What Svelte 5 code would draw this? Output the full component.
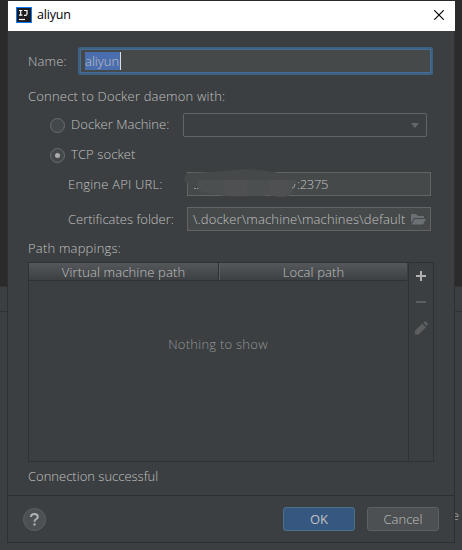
<script>
  let name = 'aliyun';
  let connection = 'tcp';
  const port = ':2375';
  const certificates = '\\.docker\\machine\\machines\\default';
  const columns = ['Virtual machine path', 'Local path'];
</script>

<div class="screen">
  <div class="backdrop">
    <div class="editor"></div>
    <div class="tool-header"></div>
    <div class="tool-body">e</div>
  </div>

  <div class="dialog">
    <header class="titlebar">
      <svg class="logo" width="16" height="16" viewBox="0 0 16 16">
        <rect width="16" height="16" fill="#087cfa" />
        <rect x="1" y="1" width="14" height="14" fill="#1d1d1f" />
        <path d="M3 3.5h3.4M4.7 3.5v4.6M3 8.1h3.4M8 3.5h3v3.3q0 1.5-1.4 1.5H8" fill="none" stroke="#fff" stroke-width="1.2" />
        <path d="M3 12.5h6" stroke="#fff" stroke-width="1.2" />
      </svg>
      <h1>{name}</h1>
      <svg class="close" width="10" height="10" viewBox="0 0 10 10">
        <path d="M.3.3l9.4 9.4M9.7.3L.3 9.7" stroke="#000" stroke-width="1.15" />
      </svg>
    </header>

    <main>
      <div class="row name-row">
        <span class="label name-label">Name:</span>
        <div class="name-input"><span class="selected">{name}</span></div>
      </div>

      <div class="section connect">Connect to Docker daemon with:</div>

      <div class="row option">
        <span class="radio" class:checked={connection === 'machine'}></span>
        <span class="label machine-label">Docker Machine:</span>
        <div class="combo">
          <svg width="8" height="5" viewBox="0 0 8 5"><path d="M0 0h8L4 5z" fill="#646769" /></svg>
        </div>
      </div>

      <div class="row option tcp">
        <span class="radio" class:checked={connection === 'tcp'}></span>
        <span class="label tcp-label">TCP socket</span>
      </div>

      <div class="row field-row">
        <span class="label field-label url-label">Engine API URL:</span>
        <div class="field url">
          <span class="port">{port}</span>
          <svg class="smudge" width="116" height="32" viewBox="0 0 116 32">
            <path d="M4 5Q34 4 50 2Q68 0 90 4L107 8L113 12L109 24Q104 30 96 29L85 27L68 28Q47 29 35 27L18 24Q10 16 1 14Q-1 7 4 5z" fill="#46494a" />
            <path d="M14 12H113L109 24Q104 30 96 29L85 27L68 28Q47 29 35 27L18 24Q12 18 14 12z" fill="#4c4f50" />
            <path d="M38 12H63V28H42zM85 12H104L106 26L96 29L85 27z" fill="#505253" opacity=".55" />
            <path d="M10 20.5h2M13 20.5h1.5M108 20q3 0 3-4" fill="none" stroke="#96999a" />
          </svg>
        </div>
      </div>

      <div class="row field-row folder">
        <span class="label field-label cert-label">Certificates folder:</span>
        <div class="field">
          <span class="cert-text">{certificates}</span>
          <svg class="folder-icon" width="15" height="12" viewBox="0 0 15 12">
            <path d="M0 10V1h5l2 2h6v2H3z" fill="#6a7073" />
            <path d="M3.5 6H15l-3 5.5H.5z" fill="#6a7073" />
          </svg>
        </div>
      </div>

      <div class="section mappings">Path mappings:</div>

      <div class="table">
        <div class="grid">
          <div class="thead">
            {#each columns as column}
              <div class="th">{column}</div>
            {/each}
          </div>
          <div class="empty">Nothing to show</div>
        </div>
        <div class="tools">
          <svg width="14" height="14" viewBox="0 0 14 14"><path d="M2 6h4V2h2v4h4v2H8v4H6V8H2z" fill="#afb1b3" /></svg>
          <svg width="14" height="14" viewBox="0 0 14 14"><path d="M2 6h10v2H2z" fill="#5c5e5f" /></svg>
          <svg width="14" height="14" viewBox="0 0 14 14">
            <path d="M1 13.5v-3.7l7.3-7.2 3.7 3.7-7.3 7.2zM9.3 1.7L10.5.5q.6-.5 1.2 0l2 2q.6.6 0 1.2l-1 1.2z" fill="#5c5e5f" />
          </svg>
        </div>
      </div>

      <div class="status">Connection successful</div>
    </main>

    <footer>
      <button class="help" aria-label="Help">
        <svg width="9" height="13" viewBox="0 0 9 13">
          <path d="M1 3.9Q1 1 4.4 1T7.8 3.7Q7.8 5 6.3 6Q4.5 7.1 4.5 8.7" fill="none" stroke="#afb1b3" stroke-width="2" />
          <path d="M3.4 10.3h2.2v2.2H3.4z" fill="#afb1b3" />
        </svg>
      </button>
      <button class="btn primary">OK</button>
      <button class="btn">Cancel</button>
    </footer>
  </div>
</div>

<style>
  :global(body) { background: #3c3f41; overflow: hidden; }
  * { box-sizing: border-box; }

  .screen { position: relative; width: 462px; height: 550px; font: 300 13px/18px 'Open Sans', 'Noto Sans', sans-serif; color: #c0c0c0; white-space: nowrap; }
  .backdrop { position: absolute; inset: 0; display: flex; flex-direction: column; background: #3c3f41; }
  .editor { height: 286px; background: #2b2b2b; }
  .tool-header { height: 26px; border-top: 1px solid #323232; border-bottom: 1px solid #2f3132; }
  .tool-body { flex: 1; padding: 194px 3px 0 0; text-align: right; font-weight: 400; color: #8e9091; }

  .dialog { position: relative; width: 448px; height: 542px; margin: 0 7px; top: 1px; display: flex; flex-direction: column; background: #3c3f41; border: solid #2d2f30; border-width: 0 1px 1px; }
  .titlebar { height: 30px; flex: none; display: flex; align-items: center; padding: 0 10px 2px 8px; margin-right: -1px; background: #fff; }
  .close { margin-right: 1px; }
  h1 { margin: 0 0 0 5px; font: 400 12.5px/18px 'Open Sans', sans-serif; color: #000; flex: 1; letter-spacing: -.2px; }

  main { height: 464px; padding: 16px 20px 0; display: flex; flex-direction: column; }
  .row { display: flex; align-items: center; flex: none; }
  .name-row { height: 28px; }
  .name-label { width: 50px; letter-spacing: .15px; }
  .name-input { width: 355px; height: 28px; border: 2px solid #3d6185; border-radius: 2px; background: #45494a; box-shadow: inset 0 0 0 1px #466d94; padding: 3px 5px; display: flex; }
  .selected { height: 18px; line-height: 18px; width: 36px; background: #4b6eaf; border-right: 1px solid #ddd; }
  .section { height: 18px; margin-top: 13px; }
  .connect { letter-spacing: .19px; line-height: 17px; }

  .option { height: 24px; margin-top: 7px; padding-left: 22px; }
  .radio { width: 15px; height: 15px; margin-right: 6px; border: 1px solid #6b6d6e; border-radius: 50%; background: #43494a; display: grid; place-items: center; }
  .checked::after { content: ''; width: 5px; height: 5px; border-radius: 50%; background: #adadad; }
  .option .label { padding-bottom: 2px; }
  .machine-label { width: 112px; letter-spacing: .05px; }
  .combo { width: 244px; height: 24px; border: 1px solid #646464; border-radius: 2px; display: flex; align-items: center; justify-content: flex-end; padding-right: 7px; }
  .tcp { margin-top: 6px; }
  .tcp-label { letter-spacing: .1px; }

  .field-row { height: 24px; margin-top: 5px; padding-left: 40px; }
  .field-label { width: 119px; }
  .url-label { letter-spacing: .2px; }
  .folder { margin-top: 11px; }
  .field { position: relative; width: 244px; height: 24px; border: 1px solid #646464; background: #45494a; display: flex; align-items: center; padding: 0 4px 0 5px; }
  .port { margin-left: 104px; letter-spacing: -.35px; position: relative; z-index: 1; }
  .smudge { position: absolute; left: -4px; top: -5px; }
  .cert-text { letter-spacing: .15px; }
  .folder-icon { margin-left: auto; }

  .mappings { margin-top: 8px; height: 18px; letter-spacing: .2px; }
  .table { height: 200px; margin-top: 5px; border: 1px solid #2f3132; display: flex; flex: none; }
  .grid { width: 380px; border-right: 1px solid #2f3132; }
  .thead { height: 18px; margin-right: 1px; display: flex; background: linear-gradient(#55585a, #3d4042); border-bottom: 1px solid #2f3132; }
  .th { text-align: center; line-height: 18px; letter-spacing: .14px; }
  .th:first-child { width: 190px; border-right: 1px solid #2f3132; }
  .th:last-child { flex: 1; border-left: 1px solid #5b5e60; }
  .empty { padding: 54px 1px 0 0; text-align: center; color: #939596; letter-spacing: .25px; }
  .tools { flex: 1; padding: 6px 1px 0 0; display: flex; flex-direction: column; align-items: center; gap: 12px; }
  .status { margin-top: 5px; }

  footer { flex: 1; border-top: 1px solid #2d2f30; display: flex; align-items: center; padding: 0 15px 0 15px; }
  button { font: inherit; color: inherit; padding: 0; }
  .help { width: 23px; height: 23px; border: 1px solid #5e6162; border-radius: 50%; background: #4c5052; margin-right: auto; display: grid; place-items: center; }
  .btn { width: 72px; height: 24px; border: 1px solid #5e6060; border-radius: 3px; background: #4c5052; margin-left: 12px; }
  .primary { background: #365880; border-color: #4c708c; font-weight: 400; }
</style>
